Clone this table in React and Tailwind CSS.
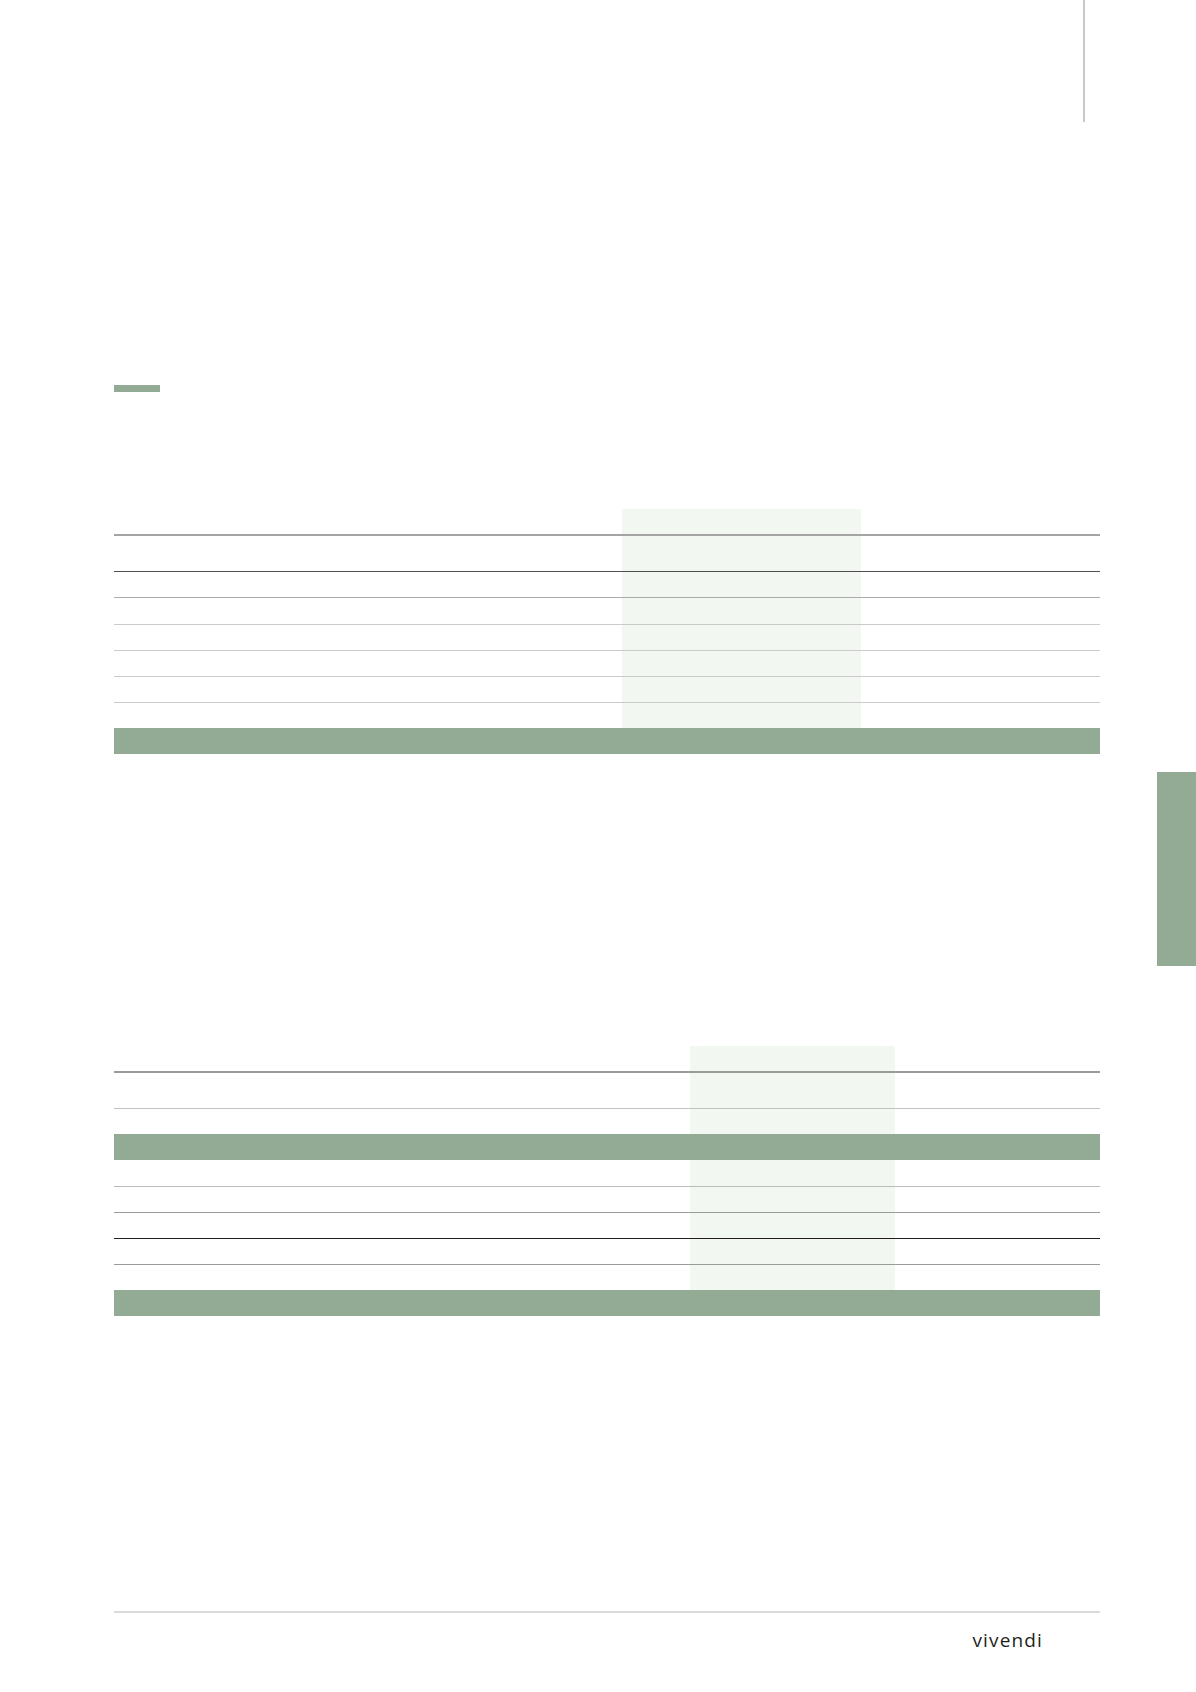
import React from "react";

const GREEN = "bg-[#93ab95]";

function Row({ row, cols }) {
  if (row.green) {
    return <div className={`${row.h} ${GREEN} w-full`} />;
  }
  return (
    <div className={`${row.h} ${row.b} w-full grid ${cols}`}>
      <div />
      <div className="bg-[#f2f7f1]" />
      <div className="bg-[#f2f7f1]" />
      <div />
      <div />
    </div>
  );
}

const T1 = [
  { h: "h-[25px]", b: "" },
  { h: "h-[37px]", b: "border-t-2 border-[#a4a4a4]" },
  { h: "h-[26px]", b: "border-t border-[#505050]" },
  { h: "h-[27px]", b: "border-t border-[#ababab]" },
  { h: "h-[26px]", b: "border-t border-[#cbcbcb]" },
  { h: "h-[26px]", b: "border-t border-[#cbcbcb]" },
  { h: "h-[26px]", b: "border-t border-[#cbcbcb]" },
  { h: "h-[26px]", b: "border-t border-[#cbcbcb]" },
  { h: "h-[26px]", green: true },
];

const T2 = [
  { h: "h-[25px]", b: "" },
  { h: "h-[37px]", b: "border-t-2 border-[#9a9a9a]" },
  { h: "h-[26px]", b: "border-t border-[#c2c2c2]" },
  { h: "h-[26px]", green: true },
  { h: "h-[26px]", b: "" },
  { h: "h-[26px]", b: "border-t border-[#bcbcbc]" },
  { h: "h-[26px]", b: "border-t border-[#9a9a9a]" },
  { h: "h-[26px]", b: "border-t border-[#231f1a]" },
  { h: "h-[26px]", b: "border-t border-[#9a9a9a]" },
  { h: "h-[26px]", green: true },
];

export default function App() {
  return (
    <div className="w-[1196px] h-[1692px] bg-white flex flex-col overflow-hidden">
      <div className="h-[122px] pl-[1083px]">
        <div className="w-[2px] h-[122px] bg-[#c8c8c8]" />
      </div>

      <div className={`mt-[263px] ml-[114px] w-[46px] h-[7px] ${GREEN}`} />

      <div className="mt-[117px] ml-[114px] w-[986px] flex flex-col">
        {T1.map((r, i) => (
          <Row key={i} row={r} cols="grid-cols-[508px_120px_119px_120px_119px]" />
        ))}
      </div>

      <div className={`mt-[18px] self-end w-[39px] h-[194px] ${GREEN}`} />

      <div className="mt-[80px] ml-[114px] w-[986px] flex flex-col">
        {T2.map((r, i) => (
          <Row key={i} row={r} cols="grid-cols-[576px_102px_103px_102px_103px]" />
        ))}
      </div>

      <div className="mt-[295px] ml-[114px] w-[986px] h-[2px] bg-[#dadada]" />

      <div className="mt-[18px] flex justify-end pr-[153px]">
        <span
          className="text-[19px] leading-none tracking-[0.06em] text-[#231f20] font-medium"
          style={{ fontFamily: '"Open Sans", "DejaVu Sans", sans-serif' }}
        >
          vivendi
        </span>
      </div>
    </div>
  );
}
